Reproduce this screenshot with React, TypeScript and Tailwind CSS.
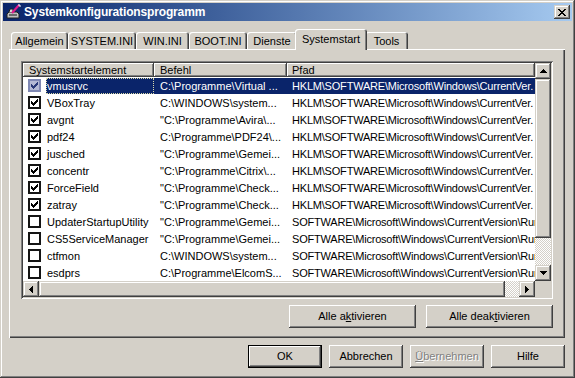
import React from 'react';

const RAISED =
  'shadow-[inset_-1px_-1px_#404040,inset_1px_1px_#ffffff,inset_-2px_-2px_#808080,inset_2px_2px_#d4d0c8]';
const SCROLLBTN =
  'shadow-[inset_-1px_-1px_#404040,inset_1px_1px_#d4d0c8,inset_-2px_-2px_#808080,inset_2px_2px_#ffffff]';
const SUNKEN =
  'shadow-[inset_1px_1px_#808080,inset_-1px_-1px_#ffffff,inset_2px_2px_#404040,inset_-2px_-2px_#d4d0c8]';
const CHECKER =
  'bg-[repeating-conic-gradient(#d4d0c8_0%_25%,#ffffff_0%_50%)] bg-[length:2px_2px]';

// tiny pixel glyph renderer for classic arrows / check marks
function Pixels({ rows, color = '#000' }: { rows: string[]; color?: string }) {
  const w = rows[0].length;
  const h = rows.length;
  return (
    <svg width={w} height={h} viewBox={`0 0 ${w} ${h}`} shapeRendering="crispEdges" className="block">
      {rows.flatMap((r, y) =>
        r.split('').map((c, x) => (c === '#' ? <rect key={`${x}-${y}`} x={x} y={y} width={1} height={1} fill={color} /> : null))
      )}
    </svg>
  );
}

const UP = ['...#...', '..###..', '.#####.', '#######'];
const DOWN = ['#######', '.#####.', '..###..', '...#...'];
const LEFT = ['...#', '..##', '.###', '####', '.###', '..##', '...#'];
const RIGHT = ['#...', '##..', '###.', '####', '###.', '##..', '#...'];
const CHECK = ['......#', '.....##', '#...###', '##.###.', '#####..', '.###...', '..#....'];
const CLOSE = ['##....##', '.##..##.', '..####..', '...##...', '..####..', '.##..##.', '##....##'];

type Row = { name: string; cmd: string; path: string; on: boolean };

const HK = String.raw`HKLM\SOFTWARE\Microsoft\Windows\CurrentVer.`;
const SW = String.raw`SOFTWARE\Microsoft\Windows\CurrentVersion\Run`;

const rows: Row[] = [
  { name: 'vmusrvc', cmd: String.raw`C:\Programme\Virtual ...`, path: HK, on: true },
  { name: 'VBoxTray', cmd: String.raw`C:\WINDOWS\system...`, path: HK, on: true },
  { name: 'avgnt', cmd: String.raw`"C:\Programme\Avira\...`, path: HK, on: true },
  { name: 'pdf24', cmd: String.raw`C:\Programme\PDF24\...`, path: HK, on: true },
  { name: 'jusched', cmd: String.raw`"C:\Programme\Gemei...`, path: HK, on: true },
  { name: 'concentr', cmd: String.raw`"C:\Programme\Citrix\...`, path: HK, on: true },
  { name: 'ForceField', cmd: String.raw`"C:\Programme\Check...`, path: HK, on: true },
  { name: 'zatray', cmd: String.raw`"C:\Programme\Check...`, path: HK, on: true },
  { name: 'UpdaterStartupUtility', cmd: String.raw`"C:\Programme\Gemei...`, path: SW, on: false },
  { name: 'CS5ServiceManager', cmd: String.raw`"C:\Programme\Gemei...`, path: SW, on: false },
  { name: 'ctfmon', cmd: String.raw`C:\WINDOWS\system...`, path: SW, on: false },
  { name: 'esdprs', cmd: String.raw`C:\Programme\ElcomS...`, path: SW, on: false },
];

const tabs = [
  { label: 'Allgemein', w: 'w-[57px]' },
  { label: 'SYSTEM.INI', w: 'w-[68px]' },
  { label: 'WIN.INI', w: 'w-[53px]' },
  { label: 'BOOT.INI', w: 'w-[58px]' },
  { label: 'Dienste', w: 'w-[50px]' },
  { label: 'Systemstart', w: 'w-[72px]', active: true },
  { label: 'Tools', w: 'w-[43px]' },
];

function Checkbox({ on, selected }: { on: boolean; selected?: boolean }) {
  return (
    <div
      className={`w-[13px] h-[13px] shrink-0 border-2 flex items-center justify-center ${
        selected ? 'border-[#7f88b4] bg-[#b4bad4]' : 'border-[#141414] bg-white'
      }`}
    >
      {on && <Pixels rows={CHECK} color={selected ? '#2a3a78' : '#000'} />}
    </div>
  );
}

function Button({ children, className = '', def = false }: { children: React.ReactNode; className?: string; def?: boolean }) {
  const inner = (
    <div className={`h-full w-full bg-[#d4d0c8] flex items-center justify-center ${RAISED}`}>{children}</div>
  );
  return def ? (
    <div className={`h-[23px] border border-black ${className}`}>{inner}</div>
  ) : (
    <div className={`h-[23px] ${className}`}>{inner}</div>
  );
}

function TitleIcon() {
  return (
    <svg width="16" height="16" viewBox="0 0 16 16" className="block shrink-0">
      <path d="M2 10 L4 8 L12 8 L14 10 L14 14 L2 14 Z" fill="#c0c0c0" stroke="#202020" strokeWidth="1" />
      <rect x="4" y="10" width="8" height="2" fill="#6a6a6a" />
      <path d="M4 8 L5 5 L8 5 L8 8" fill="#d8d8d8" stroke="#202020" strokeWidth="1" />
      <path d="M7 9 L14 1" stroke="#e0188c" strokeWidth="2" />
      <path d="M13 1 L15 1 L15 3" stroke="#ffffff" strokeWidth="1" fill="none" />
    </svg>
  );
}

export default function App() {
  return (
    <div
      className={`w-[575px] h-[378px] bg-[#d4d0c8] p-[3px] flex flex-col text-[11px] text-black font-['Liberation_Sans',Arial,sans-serif] shadow-[inset_-1px_-1px_#404040,inset_1px_1px_#d4d0c8,inset_-2px_-2px_#808080,inset_2px_2px_#ffffff] overflow-hidden`}
    >
      {/* title bar */}
      <div className="h-[18px] shrink-0 flex items-center bg-gradient-to-r from-[#0a246a] to-[#a6caf0] pl-[2px] pr-[2px]">
        <TitleIcon />
        <span className="ml-[3px] text-white font-bold text-[12px] leading-none tracking-[-0.15px]">Systemkonfigurationsprogramm</span>
        <div className={`ml-auto w-[16px] h-[14px] bg-[#d4d0c8] flex items-center justify-center ${SCROLLBTN}`}>
          <Pixels rows={CLOSE} />
        </div>
      </div>

      {/* tabs */}
      <div className="mt-[8px] h-[20px] shrink-0 flex items-end pl-[8px]">
        {tabs.map((t) =>
          t.active ? (
            <div
              key={t.label}
              className={`${t.w} -mx-[2px] -mb-[1px] h-[21px] relative z-10 bg-[#d4d0c8] rounded-t-[3px] flex items-center justify-center shadow-[inset_1px_1px_#ffffff,inset_-1px_0_#404040,inset_-2px_0_#808080]`}
            >
              {t.label}
            </div>
          ) : (
            <div
              key={t.label}
              className={`${t.w} h-[17px] bg-[#d4d0c8] rounded-t-[3px] flex items-center justify-center pt-[1px] shadow-[inset_1px_1px_#ffffff,inset_-1px_0_#404040,inset_-2px_0_#808080]`}
            >
              {t.label}
            </div>
          )
        )}
      </div>

      {/* tab page */}
      <div className="ml-[6px] w-[556px] h-[289px] shrink-0 flex flex-col pt-[12px] pl-[12px] shadow-[inset_1px_1px_#ffffff,inset_-1px_-1px_#404040,inset_-2px_-2px_#808080]">
        {/* list view */}
        <div className={`w-[532px] h-[238px] bg-white p-[2px] flex ${SUNKEN}`}>
          <div className="w-[512px] flex flex-col">
            <div className="h-[14px] flex shrink-0">
              <div className={`w-[131px] bg-[#d4d0c8] pl-[6px] leading-[14px] ${RAISED}`}>Systemstartelement</div>
              <div className={`w-[133px] bg-[#d4d0c8] pl-[6px] leading-[14px] ${RAISED}`}>Befehl</div>
              <div className={`flex-1 bg-[#d4d0c8] pl-[5px] leading-[14px] ${RAISED}`}>Pfad</div>
            </div>
            <div className="h-[204px] flex flex-col overflow-hidden">
              {rows.map((r, i) => {
                const sel = i === 0;
                const hl = sel ? 'bg-[#0a246a] text-white' : '';
                return (
                  <div key={r.name} className="h-[17px] flex shrink-0 whitespace-nowrap">
                    <div className="w-[131px] flex items-center pl-[5px]">
                      <Checkbox on={r.on} selected={sel} />
                      <div
                        className={`ml-[5px] flex-1 h-[16px] pl-[1px] leading-[16px] overflow-hidden ${hl} ${
                          sel ? 'outline outline-1 outline-dotted outline-[#d8d8a8] -outline-offset-1' : ''
                        }`}
                      >
                        {r.name}
                      </div>
                    </div>
                    <div className={`w-[133px] h-[16px] pl-[6px] leading-[16px] overflow-hidden self-center ${hl}`}>{r.cmd}</div>
                    <div className={`flex-1 h-[16px] pl-[5px] leading-[16px] overflow-hidden self-center tracking-[-0.2px] ${hl}`}>
                      {r.path}
                    </div>
                  </div>
                );
              })}
            </div>
            {/* horizontal scrollbar */}
            <div className="h-[16px] flex shrink-0">
              <div className={`w-[16px] bg-[#d4d0c8] flex items-center justify-center ${SCROLLBTN}`}>
                <Pixels rows={LEFT} />
              </div>
              <div className={`w-[466px] bg-[#d4d0c8] ${SCROLLBTN}`} />
              <div className={`w-[14px] ${CHECKER}`} />
              <div className={`w-[16px] bg-[#d4d0c8] flex items-center justify-center ${SCROLLBTN}`}>
                <Pixels rows={RIGHT} />
              </div>
            </div>
          </div>
          {/* vertical scrollbar */}
          <div className="w-[16px] flex flex-col">
            <div className={`h-[16px] bg-[#d4d0c8] flex items-center justify-center ${SCROLLBTN}`}>
              <Pixels rows={UP} />
            </div>
            <div className={`h-[159px] bg-[#d4d0c8] ${SCROLLBTN}`} />
            <div className={`h-[27px] ${CHECKER}`} />
            <div className={`h-[16px] bg-[#d4d0c8] flex items-center justify-center ${SCROLLBTN}`}>
              <Pixels rows={DOWN} />
            </div>
            <div className="h-[16px] bg-[#d4d0c8]" />
          </div>
        </div>

        <div className="w-[532px] mt-[6px] flex justify-end gap-[10px]">
          <Button className="w-[127px]">
            Alle a<span className="underline underline-offset-1">k</span>tivieren
          </Button>
          <Button className="w-[127px]">
            Alle deak<span className="underline underline-offset-1">t</span>ivieren
          </Button>
        </div>
      </div>

      {/* dialog buttons */}
      <div className="ml-[6px] w-[556px] mt-[7px] flex justify-end gap-[7px]">
        <Button className="w-[74px]" def>
          OK
        </Button>
        <Button className="w-[74px]">Abbrechen</Button>
        <Button className="w-[74px]">
          <span className="text-[#808080] [text-shadow:1px_1px_0_#ffffff]">
            <span className="underline underline-offset-1">Ü</span>bernehmen
          </span>
        </Button>
        <Button className="w-[74px]">Hilfe</Button>
      </div>
    </div>
  );
}
